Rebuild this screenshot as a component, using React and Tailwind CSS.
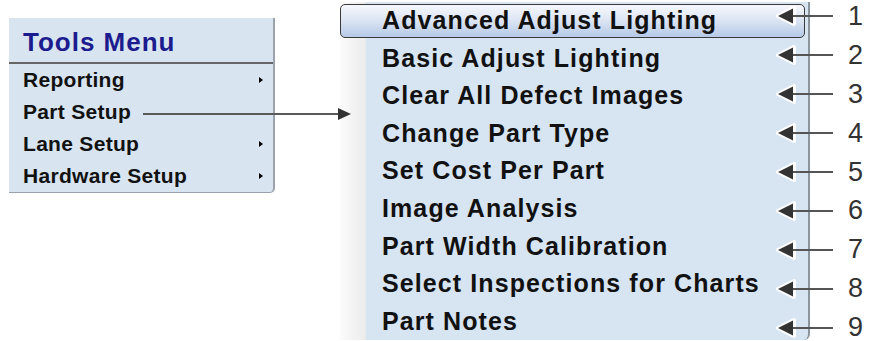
const toolsItems = [
  { label: 'Reporting', sub: true },
  { label: 'Part Setup', sub: false },
  { label: 'Lane Setup', sub: true },
  { label: 'Hardware Setup', sub: true },
]

const partSetupItems = [
  'Advanced Adjust Lighting',
  'Basic Adjust Lighting',
  'Clear All Defect Images',
  'Change Part Type',
  'Set Cost Per Part',
  'Image Analysis',
  'Part Width Calibration',
  'Select Inspections for Charts',
  'Part Notes',
]

function Callout({ n }) {
  return (
    <div className="h-[38.9px] flex items-center">
      <svg width="64" height="20" viewBox="0 0 64 20" className="shrink-0">
        <path d="M4 10 L20 2 L20 18 Z" fill="white" stroke="white" strokeWidth="4" strokeLinejoin="round" />
        <line x1="18" y1="10" x2="59" y2="10" stroke="#555" strokeWidth="2" />
        <path d="M4 10 L19 2.5 L19 17.5 Z" fill="#333" />
      </svg>
      <span className="ml-[10px] text-[27px] leading-none text-[#333] font-['Liberation_Sans',sans-serif]">{n}</span>
    </div>
  )
}

export default function App() {
  return (
    <div className="relative w-[869px] h-[341px] bg-white flex items-start overflow-hidden font-['Liberation_Sans',Arial,sans-serif]">
      {/* Tools menu */}
      <div className="ml-[9px] mt-[18px] w-[266px] h-[175px] bg-[#d8e5f1] border-r-2 border-b border-[#9aa3ad] rounded-br-[5px] flex flex-col">
        <div className="h-[44px] flex items-end pl-[14px] pb-[7px]">
          <span className="text-[26px] font-bold tracking-[1px] leading-none text-[#1c1c8e]">Tools Menu</span>
        </div>
        <div className="h-[2px] bg-[#666]" />
        {toolsItems.map((it) => (
          <div key={it.label} className="h-[32px] flex items-center pl-[14px] pr-[10px] justify-between">
            <span className="text-[21px] font-bold tracking-[0.3px] text-[#111]">{it.label}</span>
            {it.sub && (
              <span className="w-0 h-0 border-y-[3px] border-y-transparent border-l-[4px] border-l-black" />
            )}
          </div>
        ))}
      </div>

      {/* Part setup submenu */}
      <div className="ml-[65px] mt-[2px] w-[470px] h-[338px] flex flex-col bg-[linear-gradient(to_right,#fbfbfb_0px,#ececec_25px,#d7e4f1_27px)] border-r-2 border-[#8c949c] rounded-br-[6px]">
        {partSetupItems.map((label, i) => (
          <div key={label} className="h-[37.6px] flex shrink-0">
            {i === 0 ? (
              <div className="mt-[2px] mb-[2px] mr-[3px] flex-1 flex items-center pl-[41px] border border-[#3a3a3a] rounded-[5px] bg-[linear-gradient(to_bottom,#f6f8fc,#dbe4f3_50%,#b5c9e7)]">
                <span className="text-[25px] font-bold tracking-[1.1px] text-[#111]">{label}</span>
              </div>
            ) : (
              <div className="flex-1 flex items-center pl-[42px]">
                <span className="text-[25px] font-bold tracking-[1.1px] text-[#111]">{label}</span>
              </div>
            )}
          </div>
        ))}
      </div>

      {/* connector from Part Setup */}
      <svg className="absolute left-[140px] top-[104px]" width="214" height="20" viewBox="0 0 214 20">
        <line x1="3" y1="10" x2="200" y2="10" stroke="#5a5a5a" strokeWidth="2" />
        <path d="M198 4 L211 10 L198 16 Z" fill="#333" />
      </svg>

      {/* numbered callouts */}
      <div className="absolute left-[774px] top-[-3px] flex flex-col">
        {partSetupItems.map((_, i) => (
          <Callout key={i} n={i + 1} />
        ))}
      </div>
    </div>
  )
}
